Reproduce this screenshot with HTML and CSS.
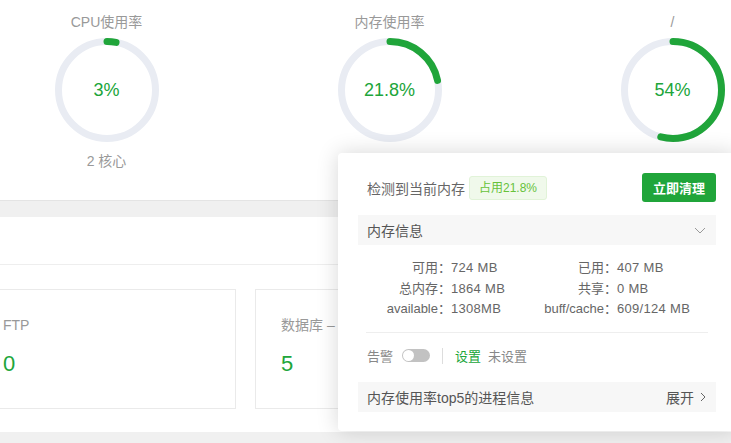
FILE: index.html
```html
<!DOCTYPE html>
<html lang="zh-CN">
<head>
    <meta charset="UTF-8">
    <meta name="viewport" content="width=device-width, initial-scale=1.0">
    <title>系统状态</title>
    <link rel="stylesheet" href="styles.css">
</head>
<body>
    <div class="page">
        <div class="overview">
            <div class="gauge">
                <div class="gauge-title">CPU使用率</div>
                <div class="ring">
                    <svg width="104" height="104" viewBox="0 0 104 104">
                        <circle class="track" cx="52" cy="52" r="48.5"></circle>
                        <circle class="bar" cx="52" cy="52" r="48.5" stroke-dasharray="9.1 304.7" transform="rotate(-90 52 52)"></circle>
                    </svg>
                    <span class="ring-value">3%</span>
                </div>
                <div class="gauge-sub">2 核心</div>
            </div>
            <div class="gauge">
                <div class="gauge-title">内存使用率</div>
                <div class="ring">
                    <svg width="104" height="104" viewBox="0 0 104 104">
                        <circle class="track" cx="52" cy="52" r="48.5"></circle>
                        <circle class="bar" cx="52" cy="52" r="48.5" stroke-dasharray="66.4 304.7" transform="rotate(-90 52 52)"></circle>
                    </svg>
                    <span class="ring-value">21.8%</span>
                </div>
                <div class="gauge-sub">407 / 1864(MB)</div>
            </div>
            <div class="gauge">
                <div class="gauge-title">/</div>
                <div class="ring">
                    <svg width="104" height="104" viewBox="0 0 104 104">
                        <circle class="track" cx="52" cy="52" r="48.5"></circle>
                        <circle class="bar" cx="52" cy="52" r="48.5" stroke-dasharray="164.5 304.7" transform="rotate(-90 52 52)"></circle>
                    </svg>
                    <span class="ring-value">54%</span>
                </div>
                <div class="gauge-sub">20G / 40G</div>
            </div>
        </div>

        <div class="panel">
            <div class="panel-head"></div>
            <div class="cards">
                <div class="card">
                    <div class="card-label">FTP</div>
                    <div class="card-value">0</div>
                </div>
                <div class="card">
                    <div class="card-label">数据库 – MySQL</div>
                    <div class="card-value">5</div>
                </div>
                <div class="card">
                    <div class="card-label">安全风险</div>
                    <div class="card-value">0</div>
                </div>
            </div>
        </div>
    </div>

    <div class="mem-pop">
        <div class="pop-head">
            <span>检测到当前内存</span>
            <span class="tag">占用21.8%</span>
            <button class="btn-clean">立即清理</button>
        </div>

        <div class="fold">
            <span>内存信息</span>
            <svg width="12" height="7" viewBox="0 0 12 7"><polyline points="1,1 6,6 11,1" fill="none" stroke="#999" stroke-width="1"/></svg>
        </div>

        <div class="mem-info">
            <span class="k">可用：</span><span>724 MB</span>
            <span class="k">已用：</span><span>407 MB</span>
            <span class="k">总内存：</span><span>1864 MB</span>
            <span class="k">共享：</span><span>0 MB</span>
            <span class="k">available：</span><span>1308MB</span>
            <span class="k">buff/cache：</span><span>609/124 MB</span>
        </div>

        <div class="divider"></div>

        <div class="alarm">
            <span>告警</span>
            <span class="switch"></span>
            <span class="sep"></span>
            <span class="link">设置</span>
            <span class="muted">未设置</span>
        </div>

        <div class="fold top5">
            <span>内存使用率top5的进程信息</span>
            <span class="more">展开
                <svg width="6" height="10" viewBox="0 0 6 10"><polyline points="1,1 5,5 1,9" fill="none" stroke="#666" stroke-width="1"/></svg>
            </span>
        </div>
    </div>
</body>
</html>
```

FILE: styles.css
```css
body {
    margin: 0;
    background: #f0f0f0;
    overflow: hidden;
    font-family: "Liberation Sans", "Noto Sans CJK SC", sans-serif;
    color: #666;
}

.page {
    margin-left: -35px;
    width: 880px;
}

.overview {
    display: flex;
    height: 200px;
    background: #fff;
    border-bottom: 1px solid #e4e4e4;
}

.gauge {
    width: 283px;
    display: flex;
    flex-direction: column;
    align-items: center;
    padding-top: 14px;
}

.gauge-title,
.gauge-sub {
    font-size: 14px;
    line-height: 16px;
    color: #999;
}

.ring {
    position: relative;
    width: 104px;
    height: 104px;
    margin-top: 8px;
}

.ring svg {
    display: block;
}

.track {
    fill: none;
    stroke: #e9ecf3;
    stroke-width: 7;
}

.bar {
    fill: none;
    stroke: #20a53a;
    stroke-width: 7;
    stroke-linecap: round;
}

.ring-value {
    position: absolute;
    left: 0;
    right: 0;
    top: 41px;
    text-align: center;
    font-size: 18px;
    line-height: 22px;
    color: #20a53a;
}

.gauge-sub {
    margin-top: 11px;
}

.panel {
    margin-top: 16px;
    background: #fff;
}

.panel-head {
    height: 47px;
    border-bottom: 1px solid #eee;
}

.cards {
    display: grid;
    grid-template-columns: repeat(3, 259px);
    gap: 19px;
    padding: 24px 0 23px 12px;
}

.card {
    height: 120px;
    box-sizing: border-box;
    border: 1px solid #eaeaea;
    padding: 27px 25px 0;
}

.card-label {
    font-size: 14px;
    line-height: 16px;
    color: #999;
}

.card-value {
    margin-top: 18px;
    font-size: 22px;
    line-height: 26px;
    color: #20a53a;
}

/* memory popover */
.mem-pop {
    position: absolute;
    left: 338px;
    top: 153px;
    width: 398px;
    box-sizing: border-box;
    padding: 20px 20px 19px;
    background: #fff;
    border-radius: 4px;
    box-shadow: 0 0 22px rgba(0, 0, 0, 0.16);
}

.pop-head {
    display: flex;
    align-items: center;
    height: 29px;
    padding-left: 9px;
    font-size: 14px;
    color: #666;
}

.tag {
    margin-left: 4px;
    height: 24px;
    box-sizing: border-box;
    padding: 0 9px;
    line-height: 22px;
    font-size: 12px;
    color: #67c23a;
    background: #f0f9eb;
    border: 1px solid #e1f3d8;
    border-radius: 3px;
}

.btn-clean {
    margin-left: auto;
    width: 74px;
    height: 29px;
    border: none;
    border-radius: 3px;
    background: #20a53a;
    color: #fff;
    font-family: inherit;
    font-size: 13px;
    font-weight: bold;
    cursor: pointer;
}

.fold {
    display: flex;
    align-items: center;
    justify-content: space-between;
    height: 30px;
    margin-top: 13px;
    padding: 0 10px 0 9px;
    background: #f7f7f7;
    font-size: 14px;
    color: #555;
}

.mem-info {
    display: grid;
    grid-template-columns: 93px 80px 86px auto;
    margin-top: 13px;
    font-size: 13px;
    line-height: 20.5px;
    letter-spacing: 0.3px;
    color: #666;
    white-space: nowrap;
}

.mem-info .k {
    text-align: right;
    letter-spacing: 0;
}

.divider {
    margin: 12px 8px 0;
    border-top: 1px solid #eee;
}

.alarm {
    display: flex;
    align-items: center;
    height: 16px;
    margin-top: 15px;
    padding-left: 9px;
    font-size: 13px;
    color: #888;
}

.switch {
    position: relative;
    width: 28px;
    height: 13px;
    margin-left: 9px;
    border-radius: 7px;
    background: #c2c2c2;
}

.switch::after {
    content: "";
    position: absolute;
    left: 1px;
    top: 1px;
    width: 11px;
    height: 11px;
    border-radius: 50%;
    background: #fff;
}

.sep {
    width: 1px;
    height: 16px;
    margin: 0 12px 0 12px;
    background: #ddd;
}

.link {
    color: #20a53a;
}

.muted {
    margin-left: 7px;
    color: #888;
}

.top5 {
    margin-top: 18px;
}

.more {
    display: flex;
    align-items: center;
    gap: 6px;
}

.more svg {
    display: block;
}
```
